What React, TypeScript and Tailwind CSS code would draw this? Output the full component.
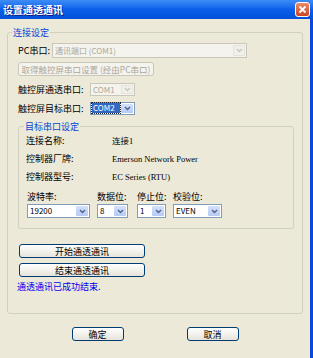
import React from 'react';

const cjk = { fontFamily: '"Noto Sans CJK SC", "Liberation Sans", sans-serif' };

const Chevron = ({ disabled = false }: { disabled?: boolean }) => (
  <svg width="7" height="5" viewBox="0 0 7 5">
    <path d="M1 1 L3.5 3.5 L6 1" fill="none" stroke={disabled ? '#C9C7BA' : '#4D6185'} strokeWidth="1.4" />
  </svg>
);

interface ComboProps {
  value: string;
  w: string;
  h?: string;
  disabled?: boolean;
  selected?: boolean;
}

const Combo = ({ value, w, h = 'h-[14px]', disabled = false, selected = false }: ComboProps) => (
  <div
    className={`flex ${w} ${h} border ${
      disabled ? 'border-[#C9C7BA] bg-[#F4F3EE]' : 'border-[#7F9DB9] bg-white'
    }`}
  >
    <div className="flex flex-1 items-center min-w-0 pl-[1px]">
      <span
        className={`text-[8px] leading-[10px] px-[1px] whitespace-nowrap ${
          disabled ? 'text-[#ACA899]' : selected ? 'bg-[#316AC5] text-white outline outline-dotted outline-[#222] flex-1' : 'text-black'
        }`}
        style={cjk}
      >
        {value}
      </span>
    </div>
    <div
      className={`flex w-[12px] m-[1px] items-center justify-center rounded-[1px] ${
        disabled ? 'bg-[#F0EFEA] border border-[#E5E3DA]' : 'bg-linear-to-b from-[#D4E0FB] to-[#B6CAF6]'
      }`}
    >
      <Chevron disabled={disabled} />
    </div>
  </div>
);

const XpButton = ({ label, w, disabled = false, small = false }: { label: string; w: string; disabled?: boolean; small?: boolean }) => (
  <button
    className={`${w} h-[14px] rounded-[3px] border flex items-center justify-center whitespace-nowrap leading-none ${
      small ? 'text-[8.5px]' : 'text-[9px]'
    } ${
      disabled
        ? 'border-[#C9C7BA] bg-[#F4F3EE] text-[#ACA899]'
        : 'border-[#003C74] bg-linear-to-b from-white to-[#E6E4DA] text-black'
    }`}
    style={cjk}
  >
    {label}
  </button>
);

export default function App() {
  return (
    <div className="w-[313px] h-[358px] bg-[#ECE9D8] flex flex-col overflow-hidden" style={cjk}>
      {/* 标题栏 */}
      <div className="h-[19px] flex items-center justify-between bg-linear-to-b from-[#3D8DF7] via-[#0A5FEA] to-[#0250D8] pl-[3px] pr-[3px]">
        <span className="text-white font-bold text-[10px] leading-none [text-shadow:1px_1px_0_#0A1E8C]">设置通透通讯</span>
        <div className="w-[15px] h-[15px] rounded-[3px] border border-white bg-linear-to-b from-[#E98A6A] to-[#D0431C] flex items-center justify-center">
          <svg width="9" height="9" viewBox="0 0 9 9">
            <path d="M1.5 1.5 L7.5 7.5 M7.5 1.5 L1.5 7.5" stroke="white" strokeWidth="1.8" />
          </svg>
        </div>
      </div>

      <div className="flex flex-1">
        <div className="flex-1 flex flex-col">
          {/* 连接设定 */}
          <fieldset className="ml-[7px] mt-[8px] w-[295px] border border-[#D0D0BF] rounded-[3px] pl-[10px] pr-[8px] pt-[5px] pb-[20px]">
            <legend className="-ml-[6px] px-[1px] text-[9px] leading-[11px] text-[#0046D5]">连接设定</legend>

            <div className="flex items-center h-[15px]">
              <span className="w-[34px] text-[9px] text-black">PC串口:</span>
              <Combo value="通讯端口 (COM1)" w="w-[195px]" h="h-[15px]" disabled />
            </div>

            <div className="mt-[4px]">
              <XpButton label="取得触控屏串口设置 (经由PC串口)" w="w-[136px]" disabled small />
            </div>

            <div className="flex items-center mt-[7px]">
              <span className="w-[72px] text-[9px] text-black">触控屏通透串口:</span>
              <Combo value="COM1" w="w-[45px]" h="h-[13px]" disabled />
            </div>

            <div className="flex items-center mt-[5px]">
              <span className="w-[72px] text-[9px] text-black">触控屏目标串口:</span>
              <Combo value="COM2" w="w-[45px]" h="h-[13px]" selected />
            </div>

            {/* 目标串口设定 */}
            <fieldset className="mt-[6px] w-[276px] border border-[#D0D0BF] rounded-[3px] pl-[7px] pb-[10px]">
              <legend className="-ml-[2px] px-[1px] text-[9px] leading-[11px] text-[#0046D5]">目标串口设定</legend>

              {[
                ['连接名称:', '连接1'],
                ['控制器厂牌:', 'Emerson Network Power'],
                ['控制器型号:', 'EC Series (RTU)'],
              ].map(([label, value]) => (
                <div key={label} className="flex items-center h-[18px] text-[9px] text-black">
                  <span className="w-[86px]">{label}</span>
                  <span className="text-[8.5px]" style={{ fontFamily: '"Liberation Serif", "Noto Sans CJK SC", serif' }}>
                    {value}
                  </span>
                </div>
              ))}

              <div className="flex mt-[5px] text-[9px] text-black">
                <div className="flex flex-col w-[63px] ml-[1px]">
                  <span className="h-[12px] leading-[12px]">波特率:</span>
                  <div className="mt-[1px]"><Combo value="19200" w="w-[63px]" /></div>
                </div>
                <div className="flex flex-col w-[31px] ml-[7px]">
                  <span className="h-[12px] leading-[12px] whitespace-nowrap">数据位:</span>
                  <div className="mt-[1px]"><Combo value="8" w="w-[31px]" /></div>
                </div>
                <div className="flex flex-col w-[29px] ml-[9px]">
                  <span className="h-[12px] leading-[12px] whitespace-nowrap">停止位:</span>
                  <div className="mt-[1px]"><Combo value="1" w="w-[29px]" /></div>
                </div>
                <div className="flex flex-col w-[49px] ml-[7px]">
                  <span className="h-[12px] leading-[12px]">校验位:</span>
                  <div className="mt-[1px]"><Combo value="EVEN" w="w-[49px]" /></div>
                </div>
              </div>
            </fieldset>

            <div className="mt-[15px] ml-[1px] flex flex-col gap-[5px]">
              <XpButton label="开始通透通讯" w="w-[126px]" />
              <XpButton label="结束通透通讯" w="w-[126px]" />
            </div>

            <p className="mt-[4px] -ml-[1px] text-[9px] leading-[12px] text-[#0000F0]">通透通讯已成功结束.</p>
          </fieldset>

          {/* 底部按钮 */}
          <div className="flex justify-center gap-[63px] mt-[13px]">
            <XpButton label="确定" w="w-[52px]" />
            <XpButton label="取消" w="w-[52px]" />
          </div>
        </div>
        <div className="w-[3px] bg-[#0A48DB]" />
      </div>
    </div>
  );
}
